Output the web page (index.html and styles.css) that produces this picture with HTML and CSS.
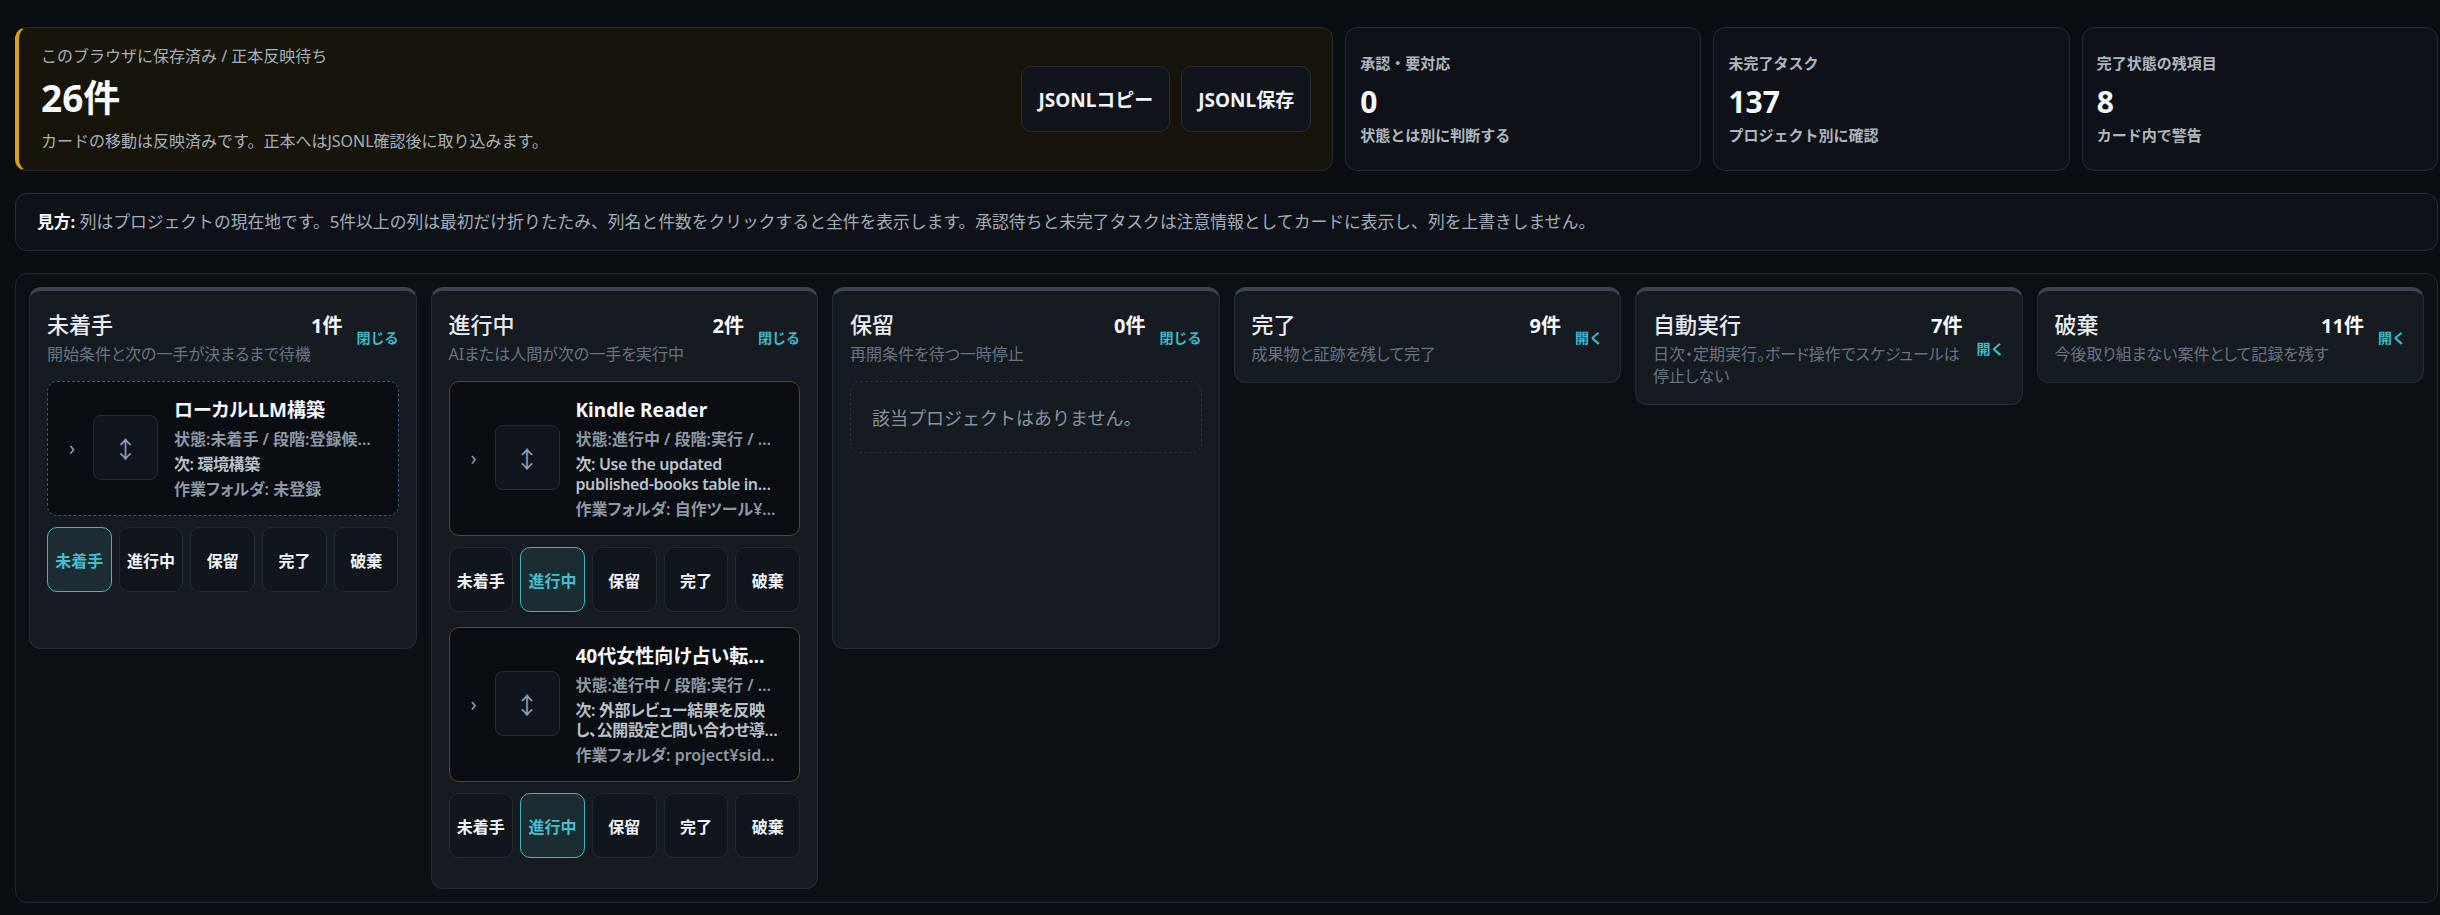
FILE: index.html
```html
<!DOCTYPE html>
<html lang="ja">
<head>
  <meta charset="UTF-8" />
  <meta name="viewport" content="width=device-width, initial-scale=1.0" />
  <title>プロジェクトボード</title>
  <link rel="stylesheet" href="styles.css">
</head>
<body>
  <div class="page">
    <section class="summary">
      <div class="pending">
        <div class="pending-text">
          <div class="pending-label">このブラウザに保存済み / 正本反映待ち</div>
          <div class="pending-count">26件</div>
          <div class="pending-note">カードの移動は反映済みです。正本へはJSONL確認後に取り込みます。</div>
        </div>
        <div class="pending-actions">
          <button class="btn">JSONLコピー</button>
          <button class="btn">JSONL保存</button>
        </div>
      </div>
      <div class="stat">
        <div class="stat-label">承認・要対応</div>
        <div class="stat-value">0</div>
        <div class="stat-note">状態とは別に判断する</div>
      </div>
      <div class="stat">
        <div class="stat-label">未完了タスク</div>
        <div class="stat-value">137</div>
        <div class="stat-note">プロジェクト別に確認</div>
      </div>
      <div class="stat">
        <div class="stat-label">完了状態の残項目</div>
        <div class="stat-value">8</div>
        <div class="stat-note">カード内で警告</div>
      </div>
    </section>

    <p class="guide"><strong>見方:</strong> 列はプロジェクトの現在地です。5件以上の列は最初だけ折りたたみ、列名と件数をクリックすると全件を表示します。承認待ちと未完了タスクは注意情報としてカードに表示し、列を上書きしません。</p>

    <section class="board">
      <div class="column open">
        <header class="col-head">
          <div class="col-info">
            <div class="col-title-row"><h2 class="col-title">未着手</h2><span class="col-count">1件</span></div>
            <p class="col-desc">開始条件と次の一手が決まるまで待機</p>
          </div>
          <button class="col-toggle">閉じる</button>
        </header>
        <div class="col-list">
          <div class="entry">
            <article class="card card-new">
              <span class="card-expand">›</span>
              <span class="card-handle">↕</span>
              <div class="card-body">
                <h3 class="card-title">ローカルLLM構築</h3>
                <p class="card-meta">状態:未着手 / 段階:登録候補 / 優先度:中</p>
                <p class="card-next">次: 環境構築</p>
                <p class="card-meta">作業フォルダ: 未登録</p>
              </div>
            </article>
            <div class="moves">
              <button class="move active">未着手</button>
              <button class="move">進行中</button>
              <button class="move">保留</button>
              <button class="move">完了</button>
              <button class="move">破棄</button>
            </div>
          </div>
        </div>
      </div>

      <div class="column open">
        <header class="col-head">
          <div class="col-info">
            <div class="col-title-row"><h2 class="col-title">進行中</h2><span class="col-count">2件</span></div>
            <p class="col-desc">AIまたは人間が次の一手を実行中</p>
          </div>
          <button class="col-toggle">閉じる</button>
        </header>
        <div class="col-list">
          <div class="entry">
            <article class="card card-active">
              <span class="card-expand">›</span>
              <span class="card-handle">↕</span>
              <div class="card-body">
                <h3 class="card-title">Kindle Reader</h3>
                <p class="card-meta">状態:進行中 / 段階:実行 / 承認:不要</p>
                <p class="card-next">次: Use the updated published-books table in the dashboard to check new titles</p>
                <p class="card-meta">作業フォルダ: 自作ツール¥kindle-reader</p>
              </div>
            </article>
            <div class="moves">
              <button class="move">未着手</button>
              <button class="move active">進行中</button>
              <button class="move">保留</button>
              <button class="move">完了</button>
              <button class="move">破棄</button>
            </div>
          </div>
          <div class="entry">
            <article class="card card-active">
              <span class="card-expand">›</span>
              <span class="card-handle">↕</span>
              <div class="card-body">
                <h3 class="card-title">40代女性向け占い転職サイト</h3>
                <p class="card-meta">状態:進行中 / 段階:実行 / 承認:不要</p>
                <p class="card-next">次: 外部レビュー結果を反映し、公開設定と問い合わせ導線を確認する</p>
                <p class="card-meta">作業フォルダ: project¥side_job¥uranai</p>
              </div>
            </article>
            <div class="moves">
              <button class="move">未着手</button>
              <button class="move active">進行中</button>
              <button class="move">保留</button>
              <button class="move">完了</button>
              <button class="move">破棄</button>
            </div>
          </div>
        </div>
      </div>

      <div class="column open">
        <header class="col-head">
          <div class="col-info">
            <div class="col-title-row"><h2 class="col-title">保留</h2><span class="col-count">0件</span></div>
            <p class="col-desc">再開条件を待つ一時停止</p>
          </div>
          <button class="col-toggle">閉じる</button>
        </header>
        <div class="col-list">
          <div class="empty">該当プロジェクトはありません。</div>
        </div>
      </div>

      <div class="column">
        <header class="col-head">
          <div class="col-info">
            <div class="col-title-row"><h2 class="col-title">完了</h2><span class="col-count">9件</span></div>
            <p class="col-desc">成果物と証跡を残して完了</p>
          </div>
          <button class="col-toggle">開く</button>
        </header>
      </div>

      <div class="column">
        <header class="col-head">
          <div class="col-info">
            <div class="col-title-row"><h2 class="col-title">自動実行</h2><span class="col-count">7件</span></div>
            <p class="col-desc">日次・定期実行。ボード操作でスケジュールは停止しない</p>
          </div>
          <button class="col-toggle">開く</button>
        </header>
      </div>

      <div class="column">
        <header class="col-head">
          <div class="col-info">
            <div class="col-title-row"><h2 class="col-title">破棄</h2><span class="col-count">11件</span></div>
            <p class="col-desc">今後取り組まない案件として記録を残す</p>
          </div>
          <button class="col-toggle">開く</button>
        </header>
      </div>
    </section>
  </div>
</body>
</html>
```

FILE: styles.css
```css
* {
  margin: 0;
  padding: 0;
  box-sizing: border-box;
}

body {
  font-family: "Noto Sans", "Noto Sans CJK JP", sans-serif;
  background: #0a0d12;
  color: #e8ebef;
}

button {
  font-family: inherit;
  cursor: pointer;
}

.page {
  display: flex;
  flex-direction: column;
  gap: 22px;
  padding: 27px 2px 13px 15px;
}

/* summary row */

.summary {
  display: grid;
  grid-template-columns: minmax(0, 3.7fr) repeat(3, minmax(0, 1fr));
  gap: 12px;
  height: 144px;
}

.pending {
  display: flex;
  align-items: center;
  justify-content: space-between;
  padding: 0 21px 0 22px;
  background: #16140b;
  border: 1px solid #2a2b2b;
  border-left: 4px solid #d9a11a;
  border-radius: 12px;
}

.pending-label {
  font-size: 16px;
  line-height: 22px;
  color: #a7afb9;
}

.pending-count {
  margin: 9px 0;
  font-size: 37px;
  line-height: 44px;
  font-weight: 700;
  color: #f7f8fa;
}

.pending-note {
  font-size: 16px;
  line-height: 24px;
  color: #a7afb9;
}

.pending-actions {
  display: flex;
  gap: 11px;
}

.btn {
  height: 66px;
  padding: 0 16px;
  font-size: 19px;
  font-weight: 700;
  color: #f2f4f7;
  background: #11151b;
  border: 1px solid #262d36;
  border-radius: 10px;
}

.stat {
  display: flex;
  flex-direction: column;
  justify-content: center;
  padding: 0 14px;
  background: #0e1218;
  border: 1px solid #262c35;
  border-radius: 12px;
}

.stat-label,
.stat-note {
  font-size: 15px;
  line-height: 22px;
  font-weight: 700;
  color: #aeb6c0;
}

.stat-value {
  margin: 9px 0 3px;
  font-size: 30px;
  line-height: 38px;
  font-weight: 700;
  color: #f5f7fa;
}

/* guide */

.guide {
  padding: 16px 21px;
  font-size: 16.8px;
  line-height: 24px;
  color: #a3adb8;
  background: #0e1218;
  border: 1px solid #262c35;
  border-radius: 12px;
}

.guide strong {
  color: #f5f7fa;
}

/* board */

.board {
  display: grid;
  grid-template-columns: repeat(6, minmax(0, 1fr));
  gap: 14px;
  align-items: start;
  padding: 13px;
  background: #0c1015;
  border: 1px solid #222831;
  border-radius: 12px;
}

.column {
  padding: 18px 17px 17px;
  background: #161a21;
  border: 1px solid #262d37;
  border-top: 4px solid #3b4451;
  border-radius: 12px;
}

.column.open {
  min-height: 362px;
}

.col-head {
  display: flex;
  align-items: center;
  gap: 14px;
}

.col-info {
  flex: 1;
  min-width: 0;
}

.col-title-row {
  display: flex;
  justify-content: space-between;
  align-items: center;
}

.col-title {
  font-size: 22px;
  line-height: 30px;
  font-weight: 500;
  color: #e8ebef;
}

.col-count {
  font-size: 20px;
  font-weight: 700;
  color: #f5f7fa;
}

.col-desc {
  margin-top: 4px;
  font-size: 16px;
  line-height: 22px;
  font-feature-settings: "palt";
  color: #687482;
}

.col-toggle {
  font-size: 14px;
  font-weight: 700;
  color: #3fb9c7;
  background: none;
  border: none;
}

.col-list {
  display: flex;
  flex-direction: column;
  gap: 15px;
  margin-top: 16px;
  padding-bottom: 13px;
}

/* project cards */

.card {
  display: flex;
  align-items: center;
  padding: 14px 16px 16px 14px;
  background: #0a0d12;
  border: 1px solid #5a4914;
  border-radius: 10px;
}

.card-new {
  border: 1px dashed #2d6168;
}

.card-expand {
  width: 20px;
  font-size: 20px;
  text-align: center;
  color: #8c9bb1;
}

.card-handle {
  display: flex;
  align-items: center;
  justify-content: center;
  flex: none;
  width: 65px;
  height: 65px;
  margin: 0 16px 0 11px;
  font-size: 24px;
  color: #8c9bb1;
  background: #11161e;
  border: 1px solid #242c37;
  border-radius: 8px;
}

.card-body {
  display: flex;
  flex-direction: column;
  gap: 5px;
  flex: 1;
  min-width: 0;
  font-feature-settings: "palt";
}

.card-title {
  font-size: 19px;
  line-height: 28px;
  font-weight: 700;
  color: #f5f7fa;
  white-space: nowrap;
  overflow: hidden;
  text-overflow: ellipsis;
}

.card-meta {
  font-size: 16px;
  line-height: 20px;
  font-weight: 600;
  color: #8e98a4;
  white-space: nowrap;
  overflow: hidden;
  text-overflow: ellipsis;
}

.card-next {
  display: -webkit-box;
  -webkit-line-clamp: 2;
  -webkit-box-orient: vertical;
  overflow: hidden;
  font-size: 16px;
  line-height: 20px;
  font-weight: 600;
  letter-spacing: -0.4px;
  color: #b9c1cb;
}

.moves {
  display: grid;
  grid-template-columns: repeat(5, 1fr);
  gap: 7px;
  margin-top: 11px;
}

.move {
  height: 65px;
  font-size: 16px;
  font-weight: 700;
  color: #f0f2f5;
  background: #11151c;
  border: 1px solid #232a34;
  border-radius: 10px;
}

.move.active {
  color: #45bfcc;
  background: #1b2d33;
  border-color: #3fb5c2;
}

.empty {
  height: 72px;
  display: flex;
  align-items: center;
  padding: 0 21px;
  font-size: 18px;
  color: #8893a0;
  border: 1px dashed #2a3039;
  border-radius: 10px;
}
```
